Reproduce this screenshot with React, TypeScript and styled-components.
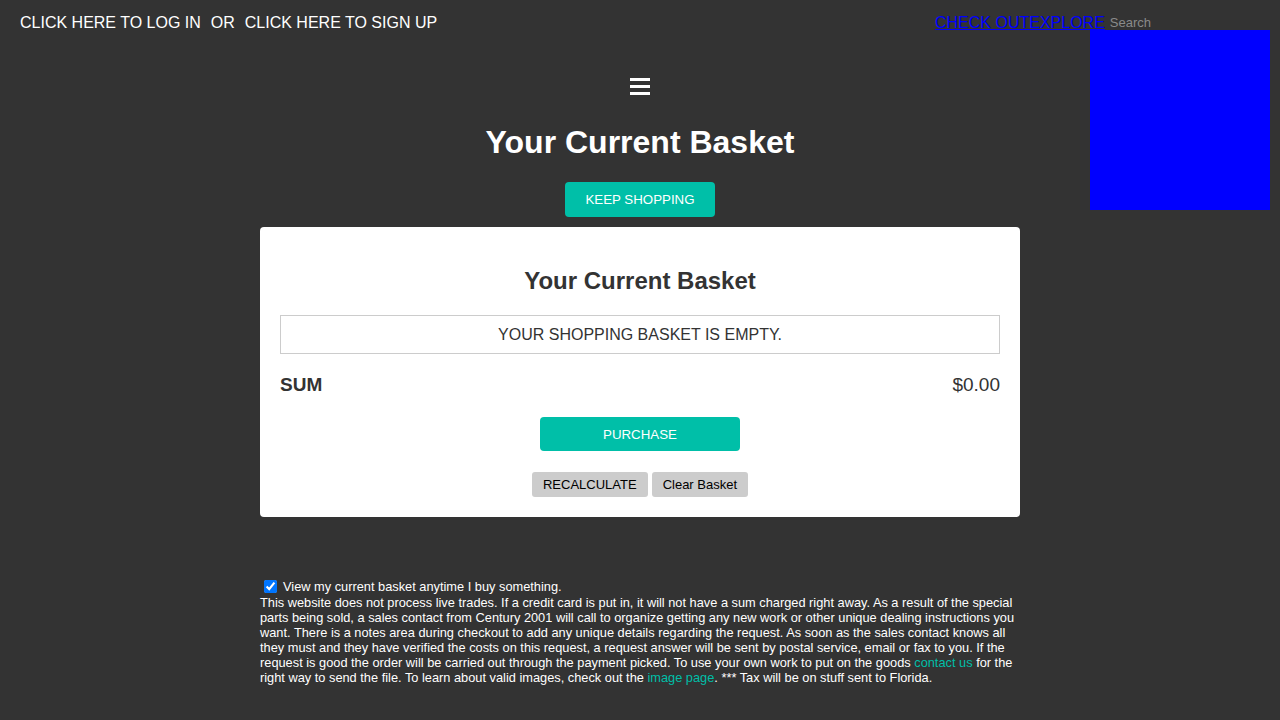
import React from "react";
import styled, { createGlobalStyle } from "styled-components";

const GlobalStyle = createGlobalStyle`
  html, body {
    margin: 0;
    padding: 0;
    background: #333333;
    font-family: "Liberation Sans", Arial, Helvetica, sans-serif;
    color: #ffffff;
  }
  * { box-sizing: border-box; }
`;

const TEAL = "#00bfa8";

const Page = styled.div`
  width: 1280px;
  min-height: 720px;
  background: #333333;
  position: relative;
`;

const Header = styled.header`
  position: relative;
  display: flex;
  justify-content: space-between;
  align-items: center;
  height: 33px;
  padding: 13px 0 0 20px;
`;

const AuthLinks = styled.nav`
  display: flex;
  align-items: center;
  gap: 10px;
  font-size: 16px;
  line-height: 20px;
  color: #ffffff;
`;

const AuthLink = styled.a`
  color: #ffffff;
  text-decoration: none;
`;

const RightCluster = styled.div`
  display: flex;
  align-items: center;
  width: 345px;
`;

const NavLink = styled.a`
  color: #0000ff;
  text-decoration: underline;
  font-size: 16px;
  line-height: 20px;
`;

const SearchInput = styled.input`
  margin-left: 5px;
  width: 158px;
  background: transparent;
  border: none;
  outline: none;
  padding: 0;
  font-family: "Liberation Sans", Arial, sans-serif;
  font-size: 13px;
  line-height: 20px;
  color: #ffffff;
  &::placeholder { color: #8a8a8a; }
`;

const BlueBox = styled.div`
  position: absolute;
  right: 10px;
  top: 30px;
  width: 180px;
  height: 180px;
  background: #0000ff;
`;

const Main = styled.main`
  display: flex;
  flex-direction: column;
  align-items: center;
`;

const MenuIcon = styled.button`
  margin-top: 43px;
  width: 22px;
  height: 20px;
  padding: 0;
  border: none;
  background: transparent;
  display: flex;
  align-items: center;
  justify-content: center;
`;

const Title = styled.h1`
  margin: 28px 0 0 0;
  font-size: 32px;
  line-height: 37px;
  font-weight: bold;
  color: #ffffff;
`;

const TealButton = styled.button<{ $width: number }>`
  width: ${(p) => p.$width}px;
  height: ${(p) => (p.$width > 160 ? 34 : 35)}px;
  border: none;
  border-radius: 4px;
  background: ${TEAL};
  color: #ffffff;
  font-family: "Liberation Sans", Arial, sans-serif;
  font-size: 13.3px;
  text-transform: uppercase;
  cursor: pointer;
`;

const KeepWrap = styled.div`
  margin-top: 21px;
`;

const Card = styled.section`
  margin-top: 10px;
  width: 760px;
  background: #ffffff;
  border-radius: 4px;
  padding: 20px;
  display: flex;
  flex-direction: column;
  align-items: stretch;
  color: #333333;
`;

const CardTitle = styled.h2`
  margin: 20px 0 0 0;
  text-align: center;
  font-size: 24px;
  line-height: 28px;
  font-weight: bold;
  color: #333333;
`;

const EmptyBox = styled.div`
  margin-top: 20px;
  border: 1px solid #cccccc;
  height: 39px;
  display: flex;
  align-items: center;
  justify-content: center;
  font-size: 16px;
  text-transform: uppercase;
  color: #333333;
`;

const SumRow = styled.div`
  margin-top: 20px;
  display: flex;
  justify-content: space-between;
  align-items: center;
  height: 22px;
  font-size: 19px;
  color: #333333;
`;

const SumLabel = styled.span`
  font-weight: bold;
`;

const Centered = styled.div<{ $top: number }>`
  margin-top: ${(p) => p.$top}px;
  display: flex;
  justify-content: center;
  gap: 4px;
`;

const GrayButton = styled.button`
  height: 25px;
  padding: 0 11px;
  border: none;
  border-radius: 3px;
  background: #cccccc;
  color: #000000;
  font-family: "Liberation Sans", Arial, sans-serif;
  font-size: 13px;
  cursor: pointer;
`;

const Footer = styled.div`
  margin-top: 60px;
  width: 760px;
  font-size: 12.8px;
  line-height: 15px;
  color: #ffffff;
  padding-bottom: 20px;
`;

const CheckRow = styled.label`
  display: flex;
  align-items: center;
  height: 18px;
`;

const Check = styled.input`
  margin: 0 6px 0 4px;
  width: 13px;
  height: 13px;
`;

const Notice = styled.p`
  margin: 0;
`;

const TealLink = styled.a`
  color: ${TEAL};
  text-decoration: none;
`;

export default function App() {
  return (
    <Page>
      <GlobalStyle />
      <Header>
        <AuthLinks>
          <AuthLink href="#">CLICK HERE TO LOG IN</AuthLink>
          <span>OR</span>
          <AuthLink href="#">CLICK HERE TO SIGN UP</AuthLink>
        </AuthLinks>
        <RightCluster>
          <NavLink href="#">CHECK OUT</NavLink>
          <NavLink href="#">EXPLORE</NavLink>
          <SearchInput placeholder="Search" />
        </RightCluster>
        <BlueBox />
      </Header>
      <Main>
        <MenuIcon aria-label="menu">
          <svg width="20" height="17" viewBox="0 0 20 17">
            <rect x="0" y="0" width="20" height="3" fill="#ffffff" />
            <rect x="0" y="7" width="20" height="3" fill="#ffffff" />
            <rect x="0" y="14" width="20" height="3" fill="#ffffff" />
          </svg>
        </MenuIcon>
        <Title>Your Current Basket</Title>
        <KeepWrap>
          <TealButton $width={150}>Keep Shopping</TealButton>
        </KeepWrap>
        <Card>
          <CardTitle>Your Current Basket</CardTitle>
          <EmptyBox>Your shopping basket is empty.</EmptyBox>
          <SumRow>
            <SumLabel>SUM</SumLabel>
            <span>$0.00</span>
          </SumRow>
          <Centered $top={21}>
            <TealButton $width={200}>Purchase</TealButton>
          </Centered>
          <Centered $top={21}>
            <GrayButton>RECALCULATE</GrayButton>
            <GrayButton>Clear Basket</GrayButton>
          </Centered>
        </Card>
        <Footer>
          <CheckRow>
            <Check type="checkbox" defaultChecked />
            View my current basket anytime I buy something.
          </CheckRow>
          <Notice>
            This website does not process live trades. If a credit card is put in, it will not have a sum
            charged right away. As a result of the special parts being sold, a sales contact from Century
            2001 will call to organize getting any new work or other unique dealing instructions you want.
            There is a notes area during checkout to add any unique details regarding the request. As soon
            as the sales contact knows all they must and they have verified the costs on this request, a
            request answer will be sent by postal service, email or fax to you. If the request is good the
            order will be carried out through the payment picked. To use your own work to put on the goods{" "}
            <TealLink href="#">contact us</TealLink> for the right way to send the file. To learn about valid
            images, check out the <TealLink href="#">image page</TealLink>. *** Tax will be on stuff sent to
            Florida.
          </Notice>
        </Footer>
      </Main>
    </Page>
  );
}
